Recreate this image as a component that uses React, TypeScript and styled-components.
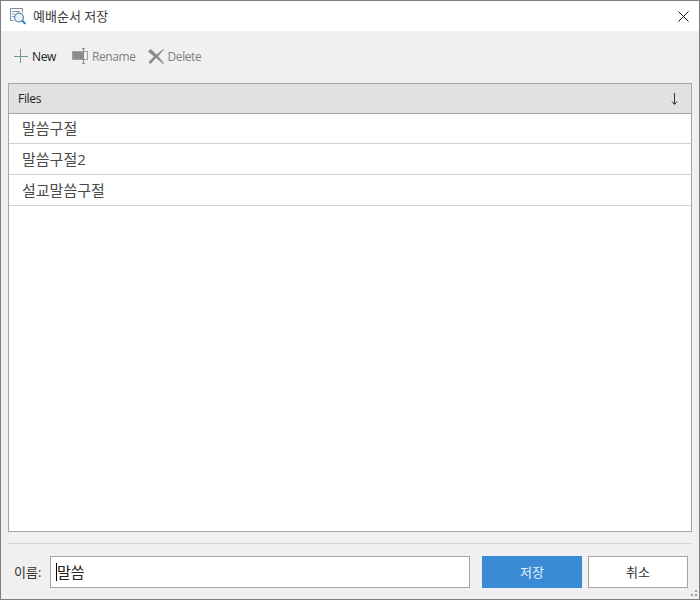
import styled, { createGlobalStyle } from 'styled-components';

const GlobalStyle = createGlobalStyle`
  html, body {
    margin: 0;
    padding: 0;
    background: #f0f0f0;
  }
  * {
    box-sizing: border-box;
  }
`;

const Dialog = styled.div`
  width: 700px;
  height: 600px;
  position: relative;
  display: flex;
  flex-direction: column;
  border: 1px solid #7f7f7f;
  background-color: #f0f0f0;
  font-family: 'Open Sans', 'Noto Sans CJK KR', sans-serif;
  color: #333;
`;

const TitleBar = styled.div`
  height: 30px;
  flex: none;
  display: flex;
  align-items: center;
  padding: 0 10px 0 8px;
  background-color: #fff;
`;

const TitleText = styled.span`
  margin-left: 6px;
  padding-bottom: 2px;
  font-size: 13px;
  color: #3a3a3a;
  flex: 1;
`;

const Toolbar = styled.div`
  height: 52px;
  flex: none;
  display: flex;
  align-items: center;
  padding: 0 0 2px 13px;
  gap: 12px;
`;

const ToolButton = styled.div<{ $disabled?: boolean }>`
  display: flex;
  align-items: center;
  gap: 4px;
  font-size: 12px;
  letter-spacing: -0.4px;
  color: ${(p) => (p.$disabled ? '#808080' : '#222')};

  &:first-child {
    margin-right: 4px;
  }
`;

const FilePanel = styled.div`
  flex: 1;
  margin: 0 7px;
  display: flex;
  flex-direction: column;
  background-color: #fff;
  border: 1px solid #a6a6a6;
`;

const FileHeader = styled.div`
  height: 30px;
  flex: none;
  display: flex;
  align-items: center;
  justify-content: space-between;
  padding: 0 13px 0 9px;
  background-color: #e1e1e1;
  border-bottom: 1px solid #a6a6a6;
  font-size: 12px;
  letter-spacing: -0.3px;
  color: #222;
`;

const FileList = styled.div`
  display: flex;
  flex-direction: column;
`;

const FileRow = styled.div`
  height: 31px;
  flex: none;
  display: flex;
  align-items: center;
  padding: 0 0 2px 13px;
  border-bottom: 1px solid #d0d0d0;
  font-size: 15px;
  color: #4a4a4a;

  &:first-child {
    height: 30px;
  }
`;

const Footer = styled.div`
  height: 56px;
  flex: none;
  margin: 11px 7px 0;
  padding: 12px 4px 0 6px;
  display: flex;
  align-items: flex-start;
  border-top: 1px solid #d4d4d4;
`;

const NameLabel = styled.label`
  width: 36px;
  flex: none;
  height: 32px;
  display: flex;
  align-items: center;
  padding-bottom: 2px;
  font-size: 13px;
  color: #333;
`;

const NameInput = styled.div`
  flex: 1;
  height: 32px;
  display: flex;
  align-items: center;
  padding: 0 0 1px 5px;
  background-color: #fff;
  border: 1px solid #a6a6a6;
  font-size: 15px;
  color: #222;
`;

const Caret = styled.span`
  width: 1px;
  height: 18px;
  background-color: #000;
`;

const Button = styled.div<{ $primary?: boolean }>`
  width: 100px;
  height: 32px;
  flex: none;
  margin-left: ${(p) => (p.$primary ? '12px' : '6px')};
  padding-bottom: 2px;
  display: flex;
  align-items: center;
  justify-content: center;
  font-size: 13px;
  color: ${(p) => (p.$primary ? '#e8f2fb' : '#333')};
  background-color: ${(p) => (p.$primary ? '#3a8ad6' : '#fff')};
  border: ${(p) => (p.$primary ? 'none' : '1px solid #a6a6a6')};
`;

const ResizeGrip = styled.svg`
  position: absolute;
  right: 1px;
  bottom: 1px;
`;

const AppIcon = () => (
  <svg width="18" height="18" viewBox="0 0 18 18" fill="none">
    <path d="M1.5 1.5h12v4M1.5 1.5v12h3" stroke="#7d8b99" />
    <path d="M3 4.5h8M3 7h2.5M3 9.5h2.5" stroke="#8a97a3" />
    <circle cx="10" cy="10.5" r="4.4" stroke="#5b8db5" strokeWidth="1.3" fill="#eaf3fa" />
    <path d="M13 13.5l3.4 3.4" stroke="#2f7fc0" strokeWidth="2" />
  </svg>
);

const CloseIcon = () => (
  <svg width="11" height="11" viewBox="0 0 11 11" fill="none">
    <path d="M.5.5l10 10M10.5.5l-10 10" stroke="#111" />
  </svg>
);

const PlusIcon = () => (
  <svg width="14" height="14" viewBox="0 0 14 14" fill="none">
    <path d="M6.5 0v14M0 7.5h14" stroke="#6f9b8b" />
  </svg>
);

const RenameIcon = () => (
  <svg width="16" height="16" viewBox="0 0 16 16" fill="none">
    <rect x="0.5" y="3.5" width="15" height="8" stroke="#a0a0a0" />
    <rect x="1" y="4" width="10" height="7" fill="#8c8c8c" />
    <path d="M11.5.5v15M10 .5h3M10 15.5h3" stroke="#8c8c8c" />
  </svg>
);

const DeleteIcon = () => (
  <svg width="16" height="15" viewBox="0 0 16 15" fill="#8c8c8c">
    <path d="M0 2.5L2.8 0L8.5 5.5L15.5 0L16 .6L10.2 7.2L16 14.2L15 15L8 9L2.5 15L.5 13L5.8 7.5Z" />
  </svg>
);

const SortIcon = () => (
  <svg width="7" height="12" viewBox="0 0 7 12" fill="none">
    <path d="M3.5 0v11M1 8.5l2.5 3 2.5-3" stroke="#333" />
  </svg>
);

const files = ['말씀구절', '말씀구절2', '설교말씀구절'];

export default function App() {
  return (
    <>
      <GlobalStyle />
      <Dialog>
        <TitleBar>
          <AppIcon />
          <TitleText>예배순서 저장</TitleText>
          <CloseIcon />
        </TitleBar>
        <Toolbar>
          <ToolButton>
            <PlusIcon />
            New
          </ToolButton>
          <ToolButton $disabled>
            <RenameIcon />
            Rename
          </ToolButton>
          <ToolButton $disabled>
            <DeleteIcon />
            Delete
          </ToolButton>
        </Toolbar>
        <FilePanel>
          <FileHeader>
            Files
            <SortIcon />
          </FileHeader>
          <FileList>
            {files.map((name) => (
              <FileRow key={name}>{name}</FileRow>
            ))}
          </FileList>
        </FilePanel>
        <Footer>
          <NameLabel>이름:</NameLabel>
          <NameInput>
            <Caret />
            말씀
          </NameInput>
          <Button $primary>저장</Button>
          <Button>취소</Button>
        </Footer>
        <ResizeGrip width="8" height="8" viewBox="0 0 8 8" fill="#a0a0a0">
          <rect x="5" y="0" width="2" height="2" />
          <rect x="1" y="4" width="2" height="2" />
          <rect x="5" y="4" width="2" height="2" />
        </ResizeGrip>
      </Dialog>
    </>
  );
}
